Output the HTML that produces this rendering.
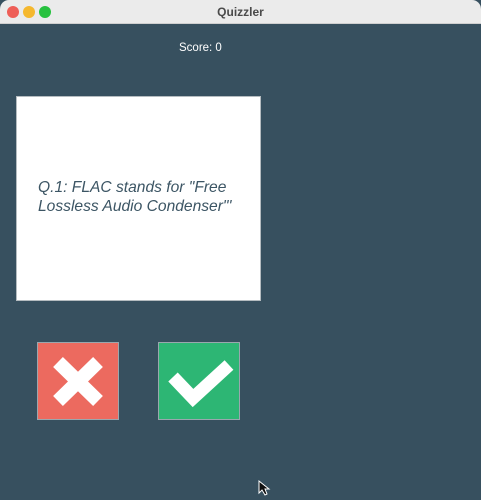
<!DOCTYPE html>
<html><head><style>
body{margin:0;width:481px;height:500px;overflow:hidden;background:#37505f;font-family:"Liberation Sans",sans-serif;position:relative}
.tb{position:absolute;left:0;top:0;width:481px;height:23px;background:#ebebeb;border-bottom:1px solid #cfcfcf;border-radius:9px 9px 0 0}
.tb .t{position:absolute;width:100%;top:5px;text-align:center;font-size:12px;font-weight:bold;color:#4a4a4a}
.d{position:absolute;top:6px;width:12px;height:12px;border-radius:50%}
.score{position:absolute;left:179px;top:42px;color:#fff;font-size:11.5px}
.card{position:absolute;left:16px;top:96px;width:243px;height:203px;background:#fff;border:1px solid #b5bcc0}
.q{position:absolute;left:21px;top:81px;font-size:15.6px;font-style:italic;color:#3c5564;line-height:19px}
.b{position:absolute;top:342px;width:80px;height:78px;border:1px solid #9aa7ae;box-sizing:border-box}
</style></head><body>
<div class="tb"><div class="d" style="left:7px;background:#ee5e57"></div><div class="d" style="left:23px;background:#f5b82e"></div><div class="d" style="left:39px;background:#27c13f"></div><div class="t">Quizzler</div></div>
<div class="score">Score: 0</div>
<div class="card"><div class="q">Q.1: FLAC stands for "Free<br>Lossless Audio Condenser"'</div></div>
<div class="b" style="left:37px;width:82px;background:#ec6a5f"></div>
<div class="b" style="left:158px;width:82px;background:#2db674"></div>
<svg width="481" height="500" style="position:absolute;left:0;top:0">
<path d="M58 362 L98 401 M98 362 L58 401" stroke="#fff" stroke-width="14" fill="none"/>
<path d="M173 377 L193 398 L229 365" stroke="#fff" stroke-width="13" fill="none"/>
<path d="M259 481 L259 493 L262 490 L265 495 L267 494 L265 489 L269 489 Z" fill="#111" stroke="#fff" stroke-width="1"/>
</svg>
</body></html>
